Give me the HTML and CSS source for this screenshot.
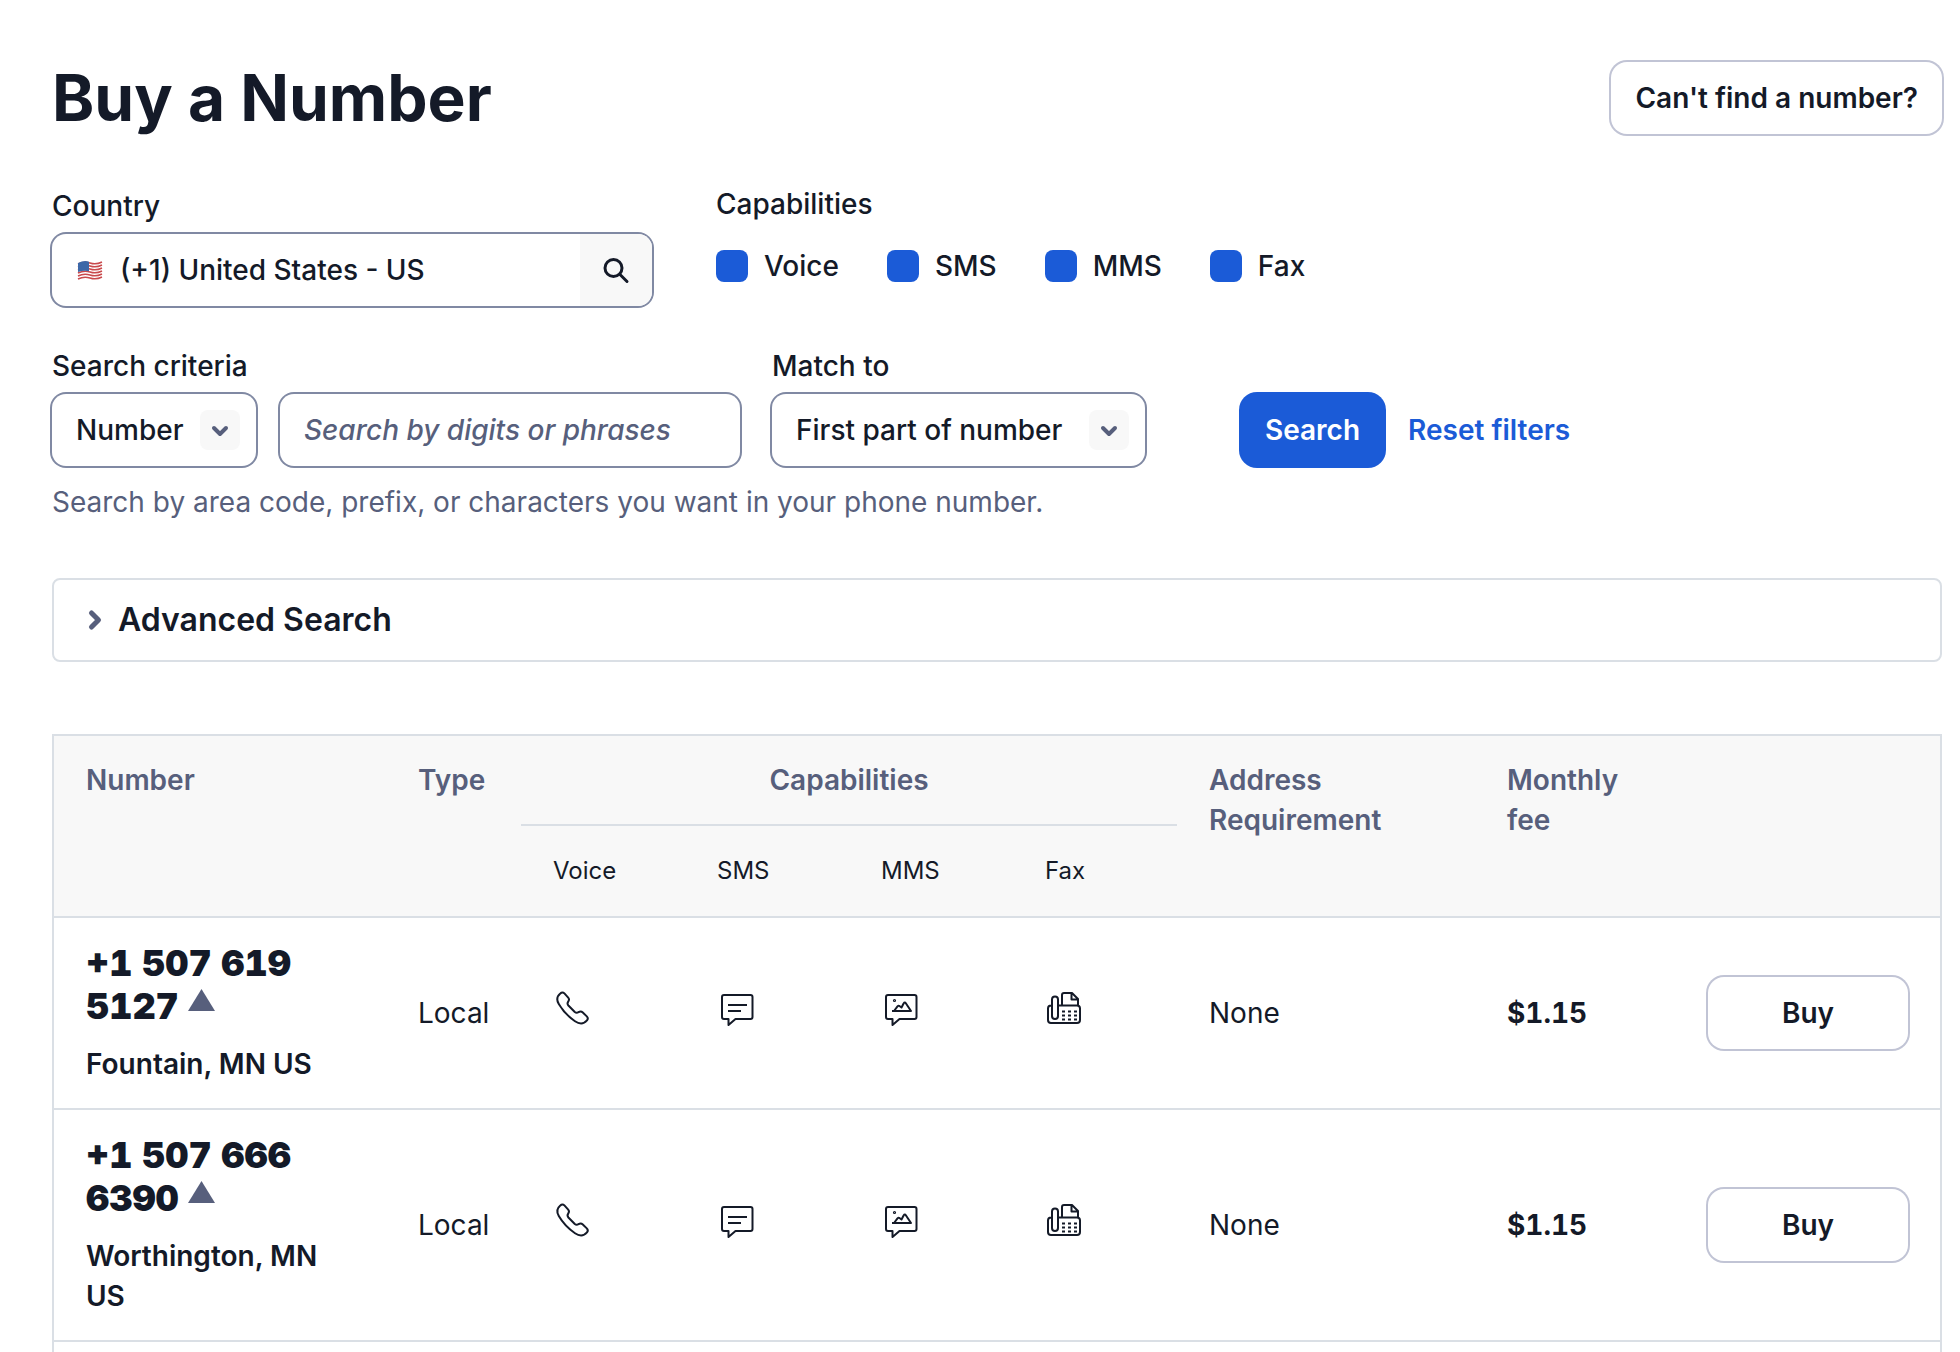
FILE: index.html
```html
<!DOCTYPE html>
<html lang="en">
<head>
<meta charset="utf-8">
<meta name="viewport" content="width=device-width, initial-scale=1">
<title>Buy a Number</title>
<link rel="stylesheet" href="styles.css">
</head>
<body>
<svg class="sprite" aria-hidden="true">
  <symbol id="chevron" viewBox="0 0 40 40"><path d="M14 18l6 6 6-6" fill="none" stroke="currentColor" stroke-width="4" stroke-linecap="round" stroke-linejoin="round"/></symbol>
  <symbol id="phone" viewBox="1 0 40 40"><path d="M8.300 5.500C9.800 4 11.200 4.200 12.400 5.400L16.200 9.600C17.600 11.200 17.200 12.200 16.200 13.600C15.200 15 15.300 16.200 16.400 17.500L22.800 24C24 25 25.200 25 26.500 24.200C28 23.200 29.500 23.300 30.800 24.500L34.800 28.400C36 29.700 36.200 31 35 32.400C31.500 36.400 27 36 23 33.200C15.500 28 10.500 22.400 6.800 16C4.300 11.800 4.800 8.400 8.300 5.500Z"/></symbol>
  <symbol id="sms" viewBox="0 0 40 40"><path d="M7 7h26.500q2 0 2 2v20q0 2-2 2H18.500L11.500 37V31H7q-2 0-2-2V9q0-2 2-2zM11 17h19M11 23h13"/></symbol>
  <symbol id="mms" viewBox="0 0 40 40"><path d="M7 7h26.500q2 0 2 2v20q0 2-2 2H18.500L11.500 37V31H7q-2 0-2-2V9q0-2 2-2zM11 23h19L25 15.500q-1.200-1.800-2.400 0L20.500 19.500l-2-1.500q-1-.8-2 .4L13 23"/><circle cx="13.500" cy="12.500" r=".6"/></symbol>
  <symbol id="fax" viewBox="1 0 40 40"><path d="M8 17.500H7q-3 0-3 3v11.500q0 3 3 3h26q3 0 3-3V20.500q0-3-3-3H15M8 11.500q0-3 3-3t3 3v16.500q0 3-3 3t-3-3zM18 17V7q0-2 2-2h8l6 6v6.500M27.500 5.500V11.500h6"/><path d="M18 23.500h3m3 0h3m3 0h3M18 27.500h3m3 0h3m3 0h3M18 31.500h3m3 0h3m3 0h3"/></symbol>
</svg>
<main class="page">
  <header class="page-header">
    <h1 class="title">Buy a Number</h1>
    <button class="button" type="button">Can't find a number?</button>
  </header>

  <form class="filters">
    <div class="filter-row filter-row-country">
      <div class="field">
        <label class="label" for="country">Country</label>
        <div class="control country-control">
          <svg class="flag" viewBox="0 0 28 22" aria-hidden="true">
            <path d="M2 4q6-3 12-1t12-1v17q-6 3-12 1T2 21z" fill="#fff"/>
            <path d="M2 5q6-3 12-1t12-1M2 8q6-3 12-1t12-1M2 11q6-3 12-1t12-1M2 14q6-3 12-1t12-1M2 17q6-3 12-1t12-1M2 20q6-3 12-1t12-1" fill="none" stroke="#c94a4d" stroke-width="1.500"/>
            <path d="M2 4q6-3 11-1.300v9.500Q8 11 2 13z" fill="#3c68a8"/>
          </svg>
          <input class="input country-input" id="country" type="text" value="(+1) United States - US">
          <button class="country-search" type="button" aria-label="Search countries">
            <svg viewBox="0 0 40 40" width="40" height="40" aria-hidden="true"><g fill="none" stroke="currentColor" stroke-width="3" stroke-linecap="round"><circle cx="17.500" cy="18" r="8.500"/><path d="M24 24.500l7 7"/></g></svg>
          </button>
        </div>
      </div>
      <fieldset class="capabilities">
        <legend class="label">Capabilities</legend>
        <div class="checks">
          <label class="check"><input class="check-box" type="checkbox" checked>Voice</label>
          <label class="check"><input class="check-box" type="checkbox" checked>SMS</label>
          <label class="check"><input class="check-box" type="checkbox" checked>MMS</label>
          <label class="check"><input class="check-box" type="checkbox" checked>Fax</label>
        </div>
      </fieldset>
    </div>

    <div>
      <div class="filter-row">
        <div class="field">
          <label class="label" for="criteria">Search criteria</label>
          <div class="criteria-controls">
            <div class="control select criteria-select">
              <select class="input" id="criteria"><option>Number</option></select>
              <svg class="select-icon"><use href="#chevron"/></svg>
            </div>
            <div class="control query-control">
              <input class="input" type="text" aria-label="Search by digits or phrases" placeholder="Search by digits or phrases">
            </div>
          </div>
        </div>
        <div class="field match-field">
          <label class="label" for="match">Match to</label>
          <div class="control select">
            <select class="input" id="match"><option>First part of number</option></select>
            <svg class="select-icon"><use href="#chevron"/></svg>
          </div>
        </div>
        <div class="actions">
          <button class="button button-primary" type="submit">Search</button>
          <a class="reset" href="#">Reset filters</a>
        </div>
      </div>
      <p class="help">Search by area code, prefix, or characters you want in your phone number.</p>
    </div>
  </form>

  <button class="disclosure" type="button" aria-expanded="false">
    <svg class="disclosure-icon" viewBox="0 0 40 40" aria-hidden="true"><path d="M17.500 13l7 7-7 7" fill="none" stroke="currentColor" stroke-width="5" stroke-linecap="round" stroke-linejoin="round"/></svg>
    Advanced Search
  </button>

  <div class="results">
    <table class="numbers">
      <colgroup><col class="col-number"><col class="col-type"><col class="col-cap"><col class="col-cap"><col class="col-cap"><col class="col-cap"><col class="col-address"><col class="col-fee"><col class="col-buy"></colgroup>
      <thead>
        <tr>
          <th rowspan="2" scope="col">Number</th>
          <th rowspan="2" scope="col">Type</th>
          <th class="group-head" colspan="4" scope="colgroup">Capabilities</th>
          <th rowspan="2" scope="col">Address Requirement</th>
          <th rowspan="2" scope="col">Monthly<br>fee</th>
          <td rowspan="2"></td>
        </tr>
        <tr>
          <th class="sub-head" scope="col">Voice</th>
          <th class="sub-head" scope="col">SMS</th>
          <th class="sub-head" scope="col">MMS</th>
          <th class="sub-head" scope="col">Fax</th>
        </tr>
      </thead>
      <tbody>
        <tr>
          <td>
            <div class="phone">+1 507 619 5127 <svg class="triangle" viewBox="0 0 27 22" aria-hidden="true"><path d="M13.500 0L27 22H0z"/></svg></div>
            <div class="place">Fountain, MN US</div>
          </td>
          <td>Local</td>
          <td><svg class="icon" role="img" aria-label="Voice"><use href="#phone"/></svg></td>
          <td><svg class="icon" role="img" aria-label="SMS"><use href="#sms"/></svg></td>
          <td><svg class="icon" role="img" aria-label="MMS"><use href="#mms"/></svg></td>
          <td><svg class="icon" role="img" aria-label="Fax"><use href="#fax"/></svg></td>
          <td>None</td>
          <td class="fee">$1.15</td>
          <td><button class="button button-block" type="button">Buy</button></td>
        </tr>
        <tr>
          <td>
            <div class="phone">+1 507 666 6390 <svg class="triangle" viewBox="0 0 27 22" aria-hidden="true"><path d="M13.500 0L27 22H0z"/></svg></div>
            <div class="place">Worthington, MN US</div>
          </td>
          <td>Local</td>
          <td><svg class="icon" role="img" aria-label="Voice"><use href="#phone"/></svg></td>
          <td><svg class="icon" role="img" aria-label="SMS"><use href="#sms"/></svg></td>
          <td><svg class="icon" role="img" aria-label="MMS"><use href="#mms"/></svg></td>
          <td><svg class="icon" role="img" aria-label="Fax"><use href="#fax"/></svg></td>
          <td>None</td>
          <td class="fee">$1.15</td>
          <td><button class="button button-block" type="button">Buy</button></td>
        </tr>
      </tbody>
    </table>
  </div>
</main>
</body>
</html>
```
FILE: styles.css
```css
:root {
  --text: #141a28;
  --text-weak: #575f7c;
  --primary: #1b5bd7;
  --border: #8089a3;
  --border-button: #c1c4d5;
  --border-weak: #dadfe5;
  --surface: #f8f8f8;
}

* { box-sizing: border-box; }

body {
  margin: 0;
  background: #fff;
  color: var(--text);
  font: 400 28px/40px Inter, "Liberation Sans", sans-serif;
}

.sprite { display: none; }

.page {
  display: flex;
  flex-direction: column;
  min-height: 100vh;
  padding: 62px 18px 0 52px;
}

.page-header {
  display: flex;
  align-items: center;
  justify-content: space-between;
  margin-bottom: 52px;
}

.title {
  margin: 0;
  font-size: 64px;
  line-height: 72px;
  font-weight: 700;
}

.button {
  height: 72px;
  padding: 0 24px;
  border: 0;
  border-radius: 16px;
  box-shadow: 0 0 0 2px var(--border-button);
  background: #fff;
  color: inherit;
  font: inherit;
  font-weight: 600;
}

.button-primary {
  background: var(--primary);
  box-shadow: 0 0 0 2px var(--primary);
  color: #fff;
}

.button-block { width: 100%; }

.filters {
  display: flex;
  flex-direction: column;
  gap: 40px;
}

.filter-row {
  display: flex;
  align-items: flex-end;
  gap: 32px;
}

.filter-row-country {
  align-items: flex-start;
  gap: 64px;
}

.field {
  display: flex;
  flex-direction: column;
  gap: 8px;
}

.label { font-weight: 500; }

.control {
  display: flex;
  height: 72px;
  border-radius: 14px;
  box-shadow: 0 0 0 2px var(--border);
  background: #fff;
}

.input {
  flex: 1;
  min-width: 0;
  padding: 0 24px;
  border: 0;
  outline: 0;
  background: transparent;
  color: var(--text);
  font: inherit;
  font-weight: 500;
  appearance: none;
}

.input::placeholder {
  color: var(--text-weak);
  font-style: italic;
  opacity: 1;
}

.country-control {
  align-items: center;
  width: 600px;
  overflow: hidden;
}

.flag {
  flex: none;
  width: 28px;
  height: 22px;
  margin-left: 24px;
}

.country-input { padding: 0 16px; }

.country-search {
  display: grid;
  place-items: center;
  width: 72px;
  height: 72px;
  padding: 0;
  border: 0;
  background: var(--surface);
  color: var(--text);
}

.capabilities {
  min-width: 0;
  margin: 0;
  padding: 0;
  border: 0;
}

.capabilities .label {
  padding: 0;
  line-height: 36px;
}

.checks {
  display: flex;
  gap: 48px;
  margin-top: 24px;
}

.check {
  display: flex;
  align-items: center;
  gap: 16px;
  font-weight: 500;
}

.check-box {
  width: 32px;
  height: 32px;
  margin: 0;
  border-radius: 8px;
  background: var(--primary);
  appearance: none;
}

.criteria-controls {
  display: flex;
  gap: 24px;
}

.select { display: grid; }

.select .input,
.select-icon { grid-area: 1 / 1; }

.select-icon {
  place-self: center end;
  width: 40px;
  height: 40px;
  margin-right: 16px;
  border-radius: 8px;
  background: var(--surface);
  color: var(--text-weak);
  pointer-events: none;
}

.criteria-select { width: 204px; }
.query-control { width: 460px; }
.match-field { width: 373px; }

.actions {
  display: flex;
  align-items: center;
  gap: 24px;
  margin-left: 64px;
}

.reset {
  color: var(--primary);
  font-weight: 600;
  text-decoration: none;
}

.help {
  margin: 16px 0 0;
  color: var(--text-weak);
}

.disclosure {
  display: flex;
  align-items: center;
  gap: 4px;
  margin: 56px 0 72px;
  padding: 16px 20px;
  border: 2px solid var(--border-weak);
  border-radius: 8px;
  background: #fff;
  color: inherit;
  font: 600 32px/48px Inter, "Liberation Sans", sans-serif;
}

.disclosure-icon {
  width: 40px;
  height: 40px;
  color: var(--text-weak);
}

.results {
  flex: 1;
  border: 2px solid var(--border-weak);
  border-bottom: 0;
}

.numbers {
  width: 100%;
  table-layout: fixed;
  border-spacing: 0;
  text-align: left;
}

.col-number { width: 332px; }
.col-type { width: 135px; }
.col-cap { width: 164px; }
.col-address { width: 298px; }
.col-fee { width: 201px; }
.col-buy { width: 264px; }

.numbers th,
.numbers td {
  padding: 24px 32px;
  border-bottom: 2px solid var(--border-weak);
}

.numbers thead { background: var(--surface); }

.numbers th {
  color: var(--text-weak);
  font-weight: 600;
  vertical-align: top;
}

.numbers .group-head { text-align: center; }

.numbers .sub-head {
  height: 92px;
  color: var(--text);
  font-size: 24px;
  font-weight: 400;
  vertical-align: middle;
}

.phone {
  margin-bottom: 16px;
  font-size: 36px;
  line-height: 43px;
  font-weight: 900;
  font-variant-numeric: tabular-nums;
}

.triangle {
  width: 27px;
  height: 22px;
  fill: var(--text-weak);
  vertical-align: 8px;
}

.place { font-weight: 600; }

.fee {
  font-weight: 700;
  font-variant-numeric: tabular-nums;
}

.icon {
  width: 40px;
  height: 40px;
  fill: none;
  stroke: currentColor;
  stroke-width: 2;
  stroke-linejoin: round;
}
```
